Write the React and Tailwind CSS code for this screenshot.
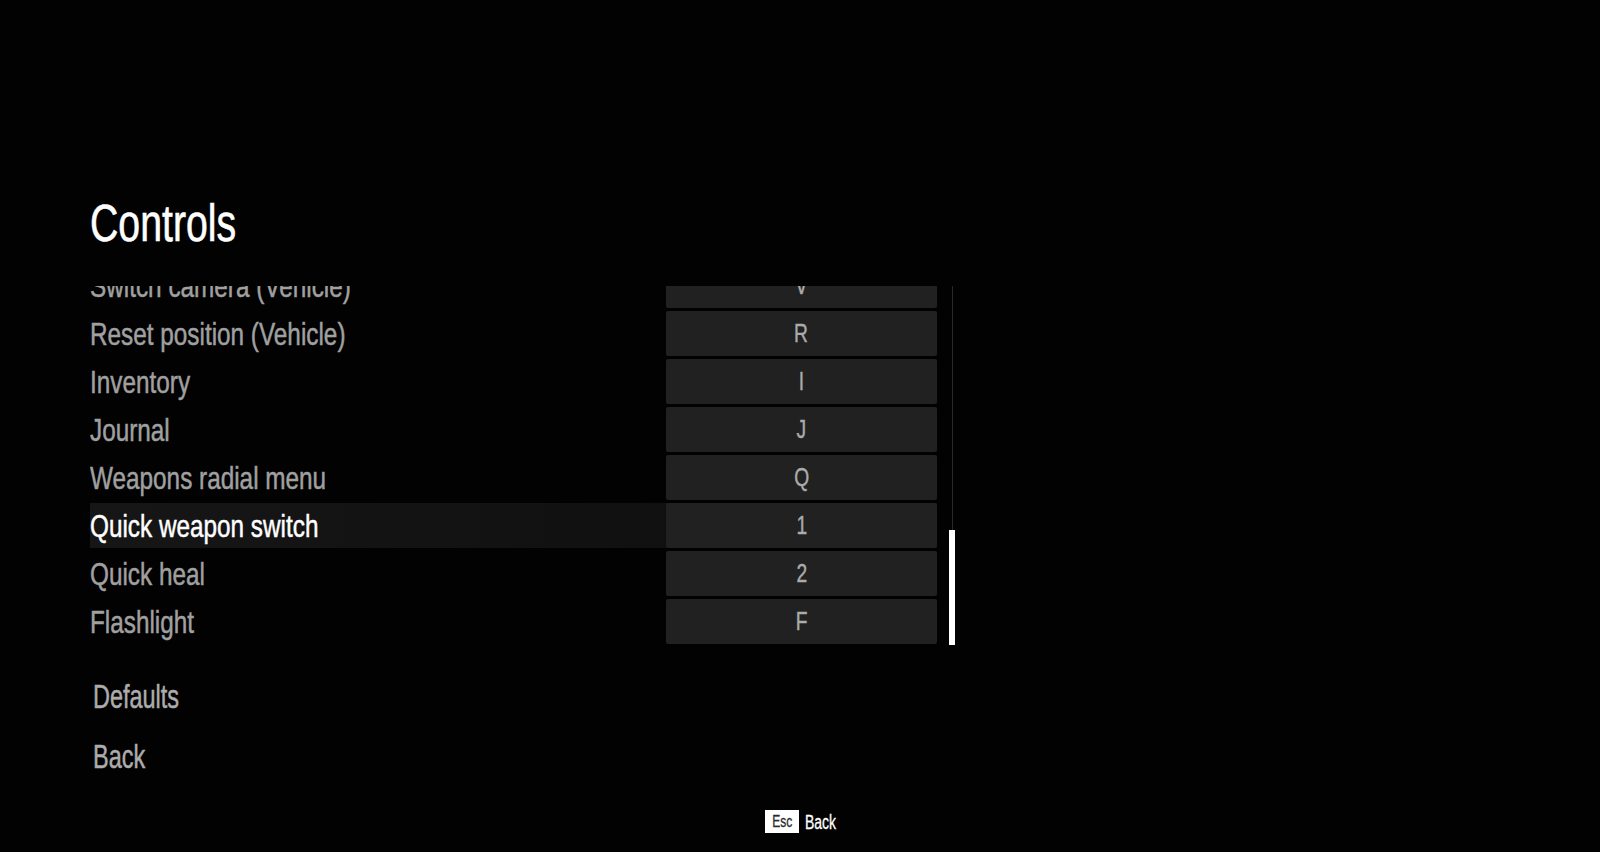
import React from 'react';

const font = { fontFamily: '"Liberation Sans", Arial, sans-serif' };

const bindings = [
    { label: 'Switch camera (Vehicle)', key: 'V' },
    { label: 'Reset position (Vehicle)', key: 'R' },
    { label: 'Inventory', key: 'I' },
    { label: 'Journal', key: 'J' },
    { label: 'Weapons radial menu', key: 'Q' },
    { label: 'Quick weapon switch', key: '1', active: true },
    { label: 'Quick heal', key: '2' },
    { label: 'Flashlight', key: 'F' },
];

// condensed look: Arial metrics squeezed horizontally, stroke thickened a bit
const Narrow = ({ children, scale = 'scale-x-[0.76]' }) => (
    <span className={`inline-block origin-left whitespace-nowrap [-webkit-text-stroke:0.5px_currentColor] ${scale}`}>{children}</span>
);

const BindingRow = ({ label, keyName, active }) => (
    <div className={`flex h-[45px] items-center ${active ? 'bg-gradient-to-r from-[#161616] to-[#0e0e0e]' : ''}`}>
        <div className={`w-[576px] text-[32px] leading-none ${active ? 'text-white' : 'text-[#a0a0a0]'}`}>
            <Narrow>{label}</Narrow>
        </div>
        <div className="flex h-full w-[271px] items-center justify-center rounded-[2px] bg-[#212121] text-[25px] text-[#ababab]">
            <span className="inline-block scale-x-[0.77] [-webkit-text-stroke:0.4px_currentColor]">{keyName}</span>
        </div>
    </div>
);

const App = () => {
    return (
        <div className="relative h-[852px] w-full overflow-hidden bg-[#020202]" style={font}>
            <div className="flex flex-col pl-[90px]">
                <h1 className="mt-[196px] h-[56px] text-[51px] leading-[56px] text-white">
                    <span className="inline-block origin-left scale-x-[0.77] [-webkit-text-stroke:0.6px_currentColor]">Controls</span>
                </h1>

                <div className="mt-[34px] flex h-[359px]">
                    <div className="w-[847px] overflow-hidden">
                        <div className="-mt-[23px] flex flex-col gap-[3px]">
                            {bindings.map(b => (
                                <BindingRow key={b.label} label={b.label} keyName={b.key} active={b.active} />
                            ))}
                        </div>
                    </div>
                    {/* scrollbar */}
                    <div className="relative ml-[12px] h-full w-[6px]">
                        <div className="absolute left-[3px] top-0 h-full w-px bg-[#2a2a2a]" />
                        <div className="absolute bottom-0 left-0 h-[115px] w-[6px] bg-white" />
                    </div>
                </div>

                <div className="mt-[26px] flex flex-col gap-[10px] pl-[3px] text-[34px] leading-none text-[#acacac]">
                    <div className="flex h-[50px] items-center">
                        <Narrow scale="scale-x-[0.69]">Defaults</Narrow>
                    </div>
                    <div className="flex h-[50px] items-center">
                        <Narrow scale="scale-x-[0.69]">Back</Narrow>
                    </div>
                </div>
            </div>

            <div className="mt-[29px] flex items-center justify-center">
                <span className="flex h-[23px] w-[34px] items-center justify-center bg-white text-[16px] text-[#2a2a2a]">
                    <span className="inline-block scale-x-[0.75] [-webkit-text-stroke:0.3px_currentColor]">Esc</span>
                </span>
                <span className="ml-[6px] w-[30px] text-[20px] leading-none text-white">
                    <span className="inline-block origin-left scale-x-[0.7] [-webkit-text-stroke:0.3px_currentColor]">Back</span>
                </span>
            </div>
        </div>
    );
};

export default App;
